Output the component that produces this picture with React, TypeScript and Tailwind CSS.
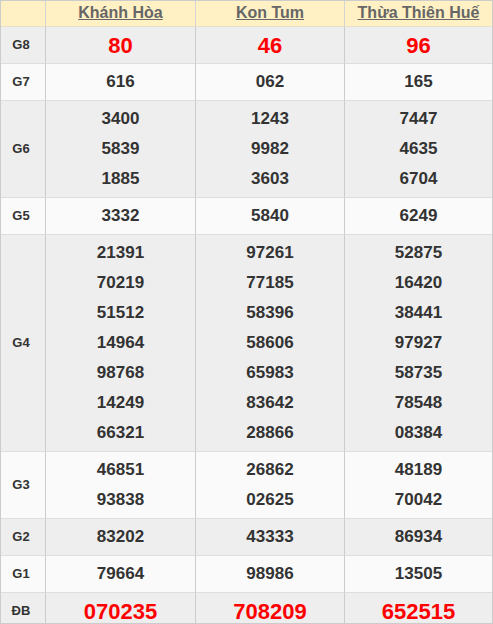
const provinces = ["Khánh Hòa", "Kon Tum", "Thừa Thiên Huế"];

type Row = { label: string; cols: string[][]; big?: boolean };

const rows: Row[] = [
  { label: "G8", cols: [["80"], ["46"], ["96"]], big: true },
  { label: "G7", cols: [["616"], ["062"], ["165"]] },
  {
    label: "G6",
    cols: [
      ["3400", "5839", "1885"],
      ["1243", "9982", "3603"],
      ["7447", "4635", "6704"],
    ],
  },
  { label: "G5", cols: [["3332"], ["5840"], ["6249"]] },
  {
    label: "G4",
    cols: [
      ["21391", "70219", "51512", "14964", "98768", "14249", "66321"],
      ["97261", "77185", "58396", "58606", "65983", "83642", "28866"],
      ["52875", "16420", "38441", "97927", "58735", "78548", "08384"],
    ],
  },
  {
    label: "G3",
    cols: [
      ["46851", "93838"],
      ["26862", "02625"],
      ["48189", "70042"],
    ],
  },
  { label: "G2", cols: [["83202"], ["43333"], ["86934"]] },
  { label: "G1", cols: [["79664"], ["98986"], ["13505"]] },
  { label: "ĐB", cols: [["070235"], ["708209"], ["652515"]], big: true },
];

export default function App() {
  return (
    <div className="w-[493px] h-[624px] overflow-hidden border border-[#cccccc] bg-white font-['Liberation_Sans',Arial,sans-serif]">
      <div className="grid grid-cols-[45px_150px_149px_147px]">
        {/* header */}
        <div className="h-[26px] bg-[#fff1c4] border-r border-b border-[#d4d4d4] border-b-[#e6e0cc]" />
        {provinces.map((p, i) => (
          <div
            key={p}
            className={`h-[26px] bg-[#fff1c4] border-b border-[#e6e0cc] text-center ${i < 2 ? "border-r border-r-[#d4d4d4]" : ""}`}
          >
            <span className="text-[16px] leading-[16px] font-bold text-[#666666] underline">{p}</span>
          </div>
        ))}

        {rows.map((r, ri) => {
          const bg = ri % 2 === 0 ? "bg-[#eeeeee]" : "bg-[#fafafa]";
          return [
            <div
              key={r.label}
              className={`${bg} flex items-center justify-center pr-[4px] border-r border-r-[#cccccc] border-b border-b-[#dedede] text-[13px] font-bold text-[#333333]`}
            >
              {r.label}
            </div>,
            ...r.cols.map((c, ci) => (
              <div
                key={r.label + ci}
                className={`${bg} py-[3px] flex flex-col items-center border-b border-b-[#dedede] ${ci < 2 ? "border-r border-r-[#cccccc]" : ""}`}
              >
                {c.map((n) => (
                  <div
                    key={n}
                    className={`h-[30px] flex items-center font-bold ${r.big ? "text-[22px] text-[#ff0000]" : "text-[17px] text-[#333333]"}`}
                  >
                    {n}
                  </div>
                ))}
              </div>
            )),
          ];
        })}
      </div>
    </div>
  );
}
